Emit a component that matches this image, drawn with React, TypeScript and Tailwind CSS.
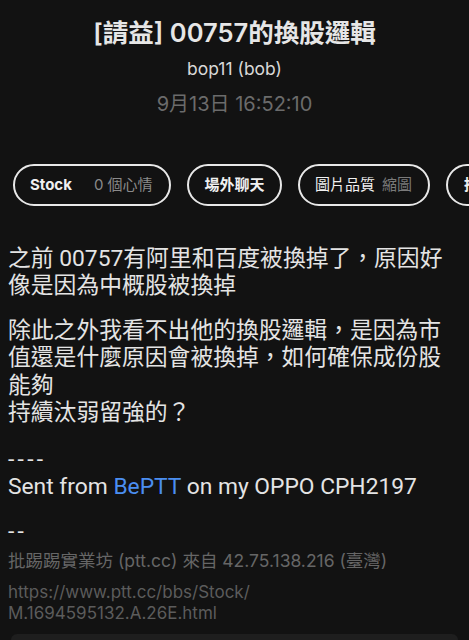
import React from "react";

const font = {
  fontFamily: 'Inter, "Noto Sans CJK TC", "Noto Sans", sans-serif',
};
const bodyFont = {
  fontFamily: 'Roboto, "Noto Sans CJK TC", "Noto Sans", sans-serif',
};

export default function App() {
  return (
    <div
      className="w-[469px] h-[640px] bg-[#121212] overflow-hidden flex flex-col text-[#e4e4e4]"
      style={font}
    >
      <header className="flex flex-col items-center pt-[16px]">
        <h1 className="text-[25.5px] leading-[34px] font-semibold text-[#e6e6e6]">
          [請益] 00757的換股邏輯
        </h1>
        <div className="mt-[7px] text-[17.5px] leading-[24px] text-[#d8d8d8]">
          bop11 (bob)
        </div>
        <div className="mt-[10px] text-[20px] leading-[26px] text-[#6b6b6b]">
          9月13日 16:52:10
        </div>
      </header>

      <div className="mt-[47px] flex gap-4 pl-[13px] whitespace-nowrap">
        <div className="shrink-0 w-[158px] h-[42px] border-2 border-[#e8e8e8] rounded-full flex items-center pl-[15px] text-[15px]">
          <span className="font-bold text-[#f0f0f0]">Stock</span>
          <span className="ml-[22px] text-[#8a8a8a]">0 個心情</span>
        </div>
        <div className="shrink-0 w-[95px] h-[42px] border-2 border-[#e8e8e8] rounded-full flex items-center justify-center text-[15px]">
          <span className="font-bold text-[#f0f0f0]">場外聊天</span>
        </div>
        <div className="shrink-0 w-[132px] h-[42px] border-2 border-[#e8e8e8] rounded-full flex items-center pl-[15px] text-[15px]">
          <span className="text-[#f0f0f0]">圖片品質</span>
          <span className="ml-[7px] text-[#7a7a7a]">縮圖</span>
        </div>
        <div className="shrink-0 w-[120px] h-[42px] border-2 border-[#e8e8e8] rounded-full flex items-center pl-[16px] text-[15px]">
          <span className="font-bold text-[#f0f0f0]">推文</span>
        </div>
      </div>

      <main
        className="mt-[39px] px-[8px] text-[22.8px] leading-[27.3px] whitespace-nowrap"
        style={bodyFont}
      >
        <div>
          <div>之前 00757有阿里和百度被換掉了，原因好</div>
          <div>像是因為中概股被換掉</div>
        </div>
        <div className="mt-[17.4px]">
          <div>除此之外我看不出他的換股邏輯，是因為市</div>
          <div>值還是什麼原因會被換掉，如何確保成份股</div>
          <div>能夠</div>
          <div>持續汰弱留強的？</div>
        </div>
        <div className="mt-[19.7px] tracking-[3.3px]">----</div>
        <div>
          Sent from <span className="text-[#4b8ef0]">BePTT</span> on my OPPO CPH2197
        </div>
        <div className="mt-[17.4px] tracking-[3.3px]">--</div>
        <div
          className="mt-[3.4px] text-[17.5px] leading-[24px] text-[#666666]"
          style={font}
        >
          批踢踢實業坊 (ptt.cc) 來自 42.75.138.216 (臺灣)
        </div>
        <div
          className="mt-[9.5px] text-[17px] leading-[21px] text-[#5c5c5c]"
          style={font}
        >
          <div>https://www.ptt.cc/bbs/Stock/</div>
          <div>M.1694595132.A.26E.html</div>
        </div>
      </main>

      <div className="mt-auto mx-[11px] h-[6px] shrink-0 bg-[#1e1e1e] rounded-t-[16px]" />
    </div>
  );
}
